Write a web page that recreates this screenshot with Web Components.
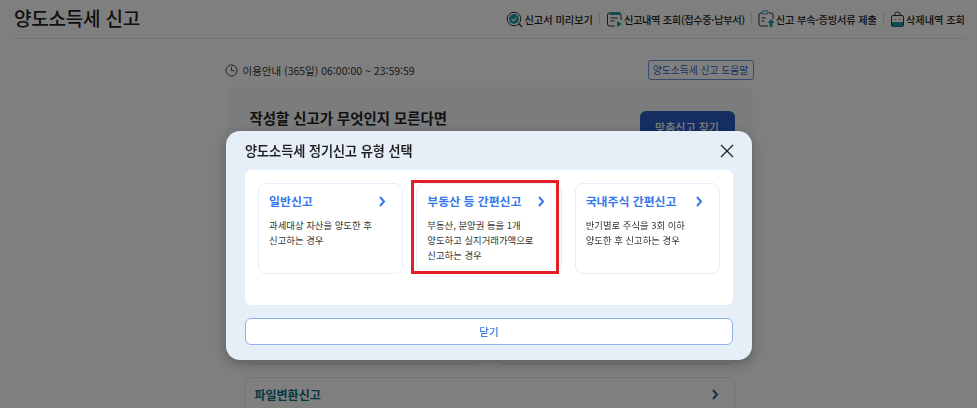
<!DOCTYPE html>
<html lang="ko"><head><meta charset="utf-8"><title>양도소득세 신고</title>
<style>
html,body{margin:0;height:408px;overflow:hidden;background:#fff;font-family:"Noto Sans CJK KR","Noto Sans",sans-serif;color:#222}
</style></head><body>
<tax-page>
  <tax-header title-text="양도소득세 신고">
    <tax-tool icon="preview">신고서 미리보기</tax-tool>
    <tax-tool icon="list" sep style="letter-spacing:-.3px">신고내역 조회(접수중·납부서)</tax-tool>
    <tax-tool icon="upload" sep style="letter-spacing:-.1px">신고 부속·증빙서류 제출</tax-tool>
    <tax-tool icon="trash" sep>삭제내역 조회</tax-tool>
  </tax-header>
  <tax-main></tax-main>
</tax-page>
<tax-overlay>
  <tax-modal heading="양도소득세 정기신고 유형 선택">
    <tax-card heading="일반신고">과세대상 자산을 양도한 후<br>신고하는 경우</tax-card>
    <tax-card heading="부동산 등 간편신고" highlight>부동산, 분양권 등을 1개<br>양도하고 실지거래가액으로<br>신고하는 경우</tax-card>
    <tax-card heading="국내주식 간편신고">반기별로 주식을 3회 이하<br>양도한 후 신고하는 경우</tax-card>
  </tax-modal>
</tax-overlay>
<script>
const def=(name,html)=>customElements.define(name,class extends HTMLElement{
  connectedCallback(){ if(this.shadowRoot)return; const r=this.attachShadow({mode:'open'}); r.innerHTML=typeof html==='function'?html(this):html; }
});
const chev=c=>`<svg width="9" height="11" viewBox="0 0 9 11" fill="none" stroke="${c}" stroke-width="2"><path d="M2 1l4 4.5L2 10"/></svg>`;
const icons={
 preview:`<svg width="17" height="17" viewBox="0 0 17 17" fill="none"><circle cx="8" cy="8" r="6.8" stroke="#2a2f33" stroke-width="1"/><circle cx="8" cy="8" r="5" fill="#1c9aa6"/><path d="M5.6 8l1.8 1.8 3-3.2" stroke="#fff" stroke-width="1.2"/><path d="M13 13l3 3" stroke="#2a2f33" stroke-width="1.2"/></svg>`,
 list:`<svg width="17" height="17" viewBox="0 0 17 17" fill="none"><path d="M6 2H3.5Q1.5 2 1.500 4v9q0 2 2 2H9M15 9V4q0-2-2-2h-2" stroke="#333" stroke-width="1"/><rect x="3.500" y="1" width="11" height="3" rx="1" fill="#1c9aa6"/><path d="M4.500 7h7M4.500 10h4" stroke="#333"/><path d="M11 10l5 3-5 3z" fill="#1c9aa6"/></svg>`,
 upload:`<svg width="17" height="18" viewBox="0 0 17 18" fill="none"><path d="M4 3H3Q1 3 1 5v9q0 2 2 2h7M15 9V5q0-2-2-2h-2" stroke="#333"/><rect x="4" y="1" width="6" height="3" rx="1" stroke="#1c9aa6"/><path d="M3.500 8h4M3.500 11h3" stroke="#333"/><path d="M13 9l3.500 4H14.500v4h-3v-4H9.500z" fill="#1c9aa6"/></svg>`,
 trash:`<svg width="15" height="17" viewBox="0 0 15 17" fill="none"><path d="M5 5V3q0-2 2.500-2T10 3v2" stroke="#333"/><rect x="1.500" y="4.500" width="12" height="11" rx="1.500" stroke="#333"/><path d="M2 11h11v3.500q0 1-1 1H3q-1 0-1-1z" fill="#1c9aa6"/><path d="M5 8v1M10 8v1" stroke="#333"/></svg>`
};
def('tax-page',`<style>:host{display:block;height:408px;overflow:hidden}</style><slot></slot>`);
def('tax-header',h=>`<style>
:host{display:block;padding:0 12px 0 14px}
.b{height:38px;display:flex;align-items:center;justify-content:space-between;border-bottom:1px solid #e4e6e8}
h1{margin:0 0 3px;font-size:19px;font-weight:500;letter-spacing:-.2px;color:#222;line-height:28px}
nav{display:flex;align-items:center}
</style><div class="b"><h1>${h.getAttribute('title-text')}</h1><nav><slot></slot></nav></div>`);
def('tax-tool',h=>`<style>
:host{display:flex;align-items:center;font-size:10.2px;font-weight:500;color:#222;white-space:nowrap}
.s{width:1px;height:12px;background:#d8dadc;margin:0 6px}
.i{display:flex;margin-right:1px}
</style>${h.hasAttribute('sep')?'<span class="s"></span>':''}<span class="i">${icons[h.getAttribute('icon')]}</span><slot></slot>`);
def('tax-main',`<style>
:host{display:block;width:528px;margin:0 auto;box-sizing:border-box;padding-left:1px}
.info{display:flex;align-items:center;justify-content:space-between;height:48px;box-sizing:border-box;padding-top:14px;margin-left:-1px;margin-right:-1px}
.t{display:flex;align-items:center;gap:5px;font-size:10.5px;color:#333}
.help{height:20px;width:106px;box-sizing:border-box;border:1px solid #6d93e0;border-radius:3px;color:#2f62c8;font-size:9.800px;display:flex;align-items:center;justify-content:center}
.panel{background:#f6f8fa;border-radius:10px;height:275px;box-sizing:border-box;padding:14px 18px 0 24px;display:flex;justify-content:space-between;align-items:flex-start}
h2{margin:6px 0 0;font-size:14.400px;font-weight:700;color:#222;line-height:22px}
.cta{width:95px;height:32px;background:#2b5fc7;border-radius:6px;color:#fff;font-size:11px;font-weight:500;display:flex;align-items:center;justify-content:center;margin-top:10px}
.row{display:flex;margin:-12px 18px 0;gap:15px;height:14px}
.row i{display:block;flex:1;border:1px solid #dfe9ef;border-radius:8px;background:#fff}
.file{margin:13px 18px 0;height:60px;box-sizing:border-box;border:1px solid #dfe9ef;border-radius:8px;background:#fff;padding:0 14px 0 10px;display:flex;justify-content:space-between;align-items:flex-start;line-height:33px;font-size:12px;font-weight:700;color:#0c6f7c}
.file svg{margin-top:11px}
</style>
<div class="info"><div class="t"><svg width="13" height="13" viewBox="0 0 13 13" fill="none" stroke="#444"><circle cx="6.500" cy="6.500" r="5.500"/><path d="M6.500 3v3.700h3"/></svg>이용안내 (365일) 06:00:00 ~ 23:59:59</div><div class="help">양도소득세 신고 도움말</div></div>
<div class="panel"><h2>작성할 신고가 무엇인지 모른다면</h2><div class="cta">맞춤신고 찾기</div></div>
<div class="row"><i></i><i></i></div>
<div class="file">파일변환신고${chev('#0c6f7c')}</div>`);
def('tax-overlay',`<style>:host{position:fixed;inset:0;display:block;background:rgba(0,0,0,.5)}</style><slot></slot>`);
def('tax-modal',h=>`<style>
:host{position:absolute;left:226px;top:131px;width:526px;height:229px;box-sizing:border-box;background:#e6eef8;border-radius:14px;padding:0 19px;display:flex;flex-direction:column;box-shadow:0 4px 14px rgba(0,0,0,.25)}
header{height:39px;display:flex;align-items:center;justify-content:space-between}
h3{margin:0;font-size:13.100px;font-weight:500;color:#1d1d1d;-webkit-text-stroke:.15px #1d1d1d}
.x{display:flex;margin-right:-1px;background:none;border:0;padding:0}
.body{height:135px;background:#fff;border-radius:6px;padding:13px 13px 0;box-sizing:border-box;display:flex;gap:13px;align-items:flex-start}
.close{margin-top:13px;height:27px;border:1px solid #8eb2ee;border-radius:6px;background:#fff;color:#3a78e6;font:500 10.500px "Noto Sans CJK KR",sans-serif;padding:0}
</style><header><h3>${h.getAttribute('heading')}</h3><button class="x" aria-label="닫기"><svg width="14" height="14" viewBox="0 0 14 14" stroke="#222" stroke-width="1.300" fill="none"><path d="M1 1l12 12M13 1L1 13"/></svg></button></header>
<div class="body"><slot></slot></div><button class="close">닫기</button>`);
def('tax-card',h=>`<style>
:host{display:block;position:relative;width:145.5px;height:91px;box-sizing:border-box;border:1px solid #e6eefb;border-radius:8px;padding:0 11px 0 10px;background:#fff}
.h{display:flex;justify-content:space-between;align-items:center;height:33px;padding-right:4px}
.h svg{margin-top:1px}
.n{font-size:11.900px;font-weight:700;color:#3478ea}
.d{font-size:9.400px;line-height:15px;color:#333;padding-top:1px}
.r{position:absolute;left:-6.500px;top:-4px;width:148px;height:94px;box-sizing:border-box;border:3px solid #e41f26;pointer-events:none}
</style><div class="h"><span class="n">${h.getAttribute('heading')}</span>${chev('#3478ea')}</div><div class="d"><slot></slot></div>${h.hasAttribute('highlight')?'<div class="r"></div>':''}`);
</script>
</body></html>
